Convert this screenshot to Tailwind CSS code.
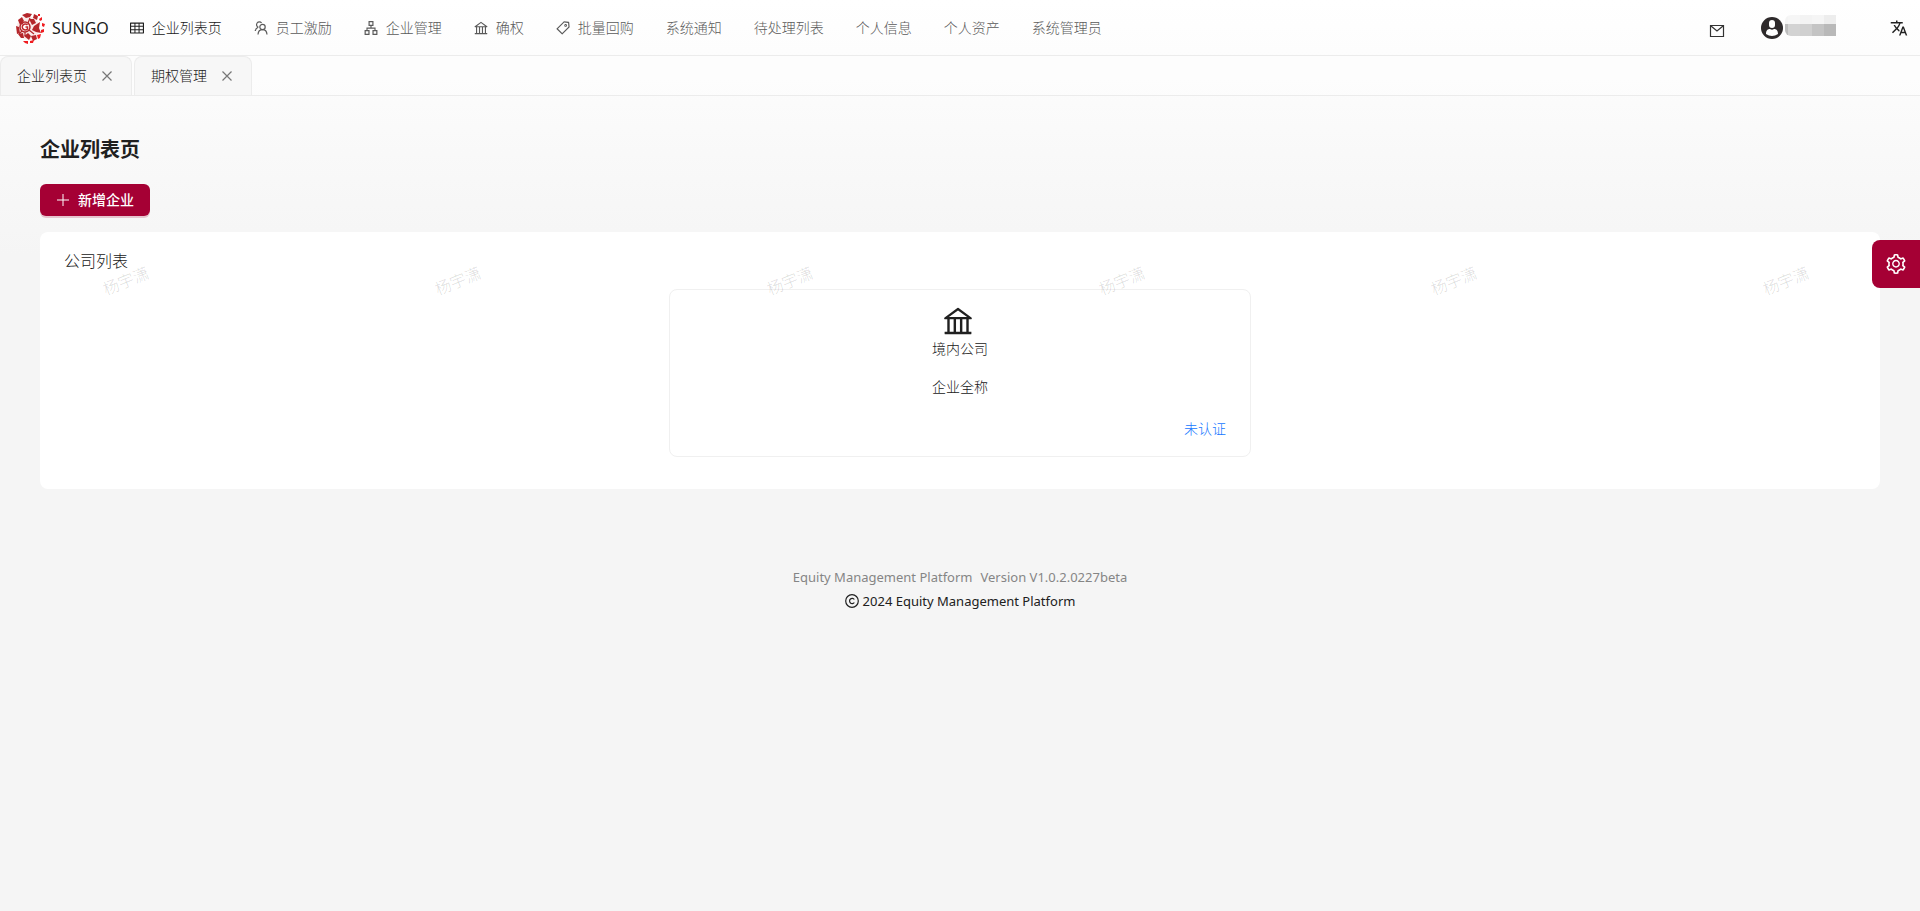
<!DOCTYPE html>
<html lang="zh-CN">
<head>
<meta charset="utf-8">
<title>企业列表页</title>
<script src="https://cdn.jsdelivr.net/npm/@tailwindcss/browser@4"></script>
</head>
<body class="min-h-screen bg-[#f5f5f5] font-['Noto_Sans','Noto_Sans_CJK_SC',sans-serif] text-sm font-light text-[#202020]">
<svg class="hidden" aria-hidden="true">
  <symbol id="bank" viewBox="64 64 896 896"><path d="M894 462c30.9 0 43.8-39.7 18.7-58L530.8 126.2a31.81 31.81 0 00-37.6 0L111.3 404c-25.1 18.2-12.2 58 18.8 58H192v374h-72c-4.4 0-8 3.6-8 8v52c0 4.4 3.6 8 8 8h784c4.4 0 8-3.6 8-8v-52c0-4.4-3.6-8-8-8h-72V462h62zM512 196.7l271.1 197.2H240.9L512 196.7zM264 462h117v374H264V462zm189 0h117v374H453V462zm307 374H642V462h118v374z"/></symbol>
  <symbol id="close" viewBox="0 0 12 12"><path d="M1.5 1.5l9 9M10.5 1.5l-9 9" fill="none" stroke="currentColor" stroke-width="1.2"/></symbol>
</svg>
<div class="relative min-h-screen bg-[linear-gradient(#ffffff,#f5f5f5_28%)]">
  <header class="flex h-14 items-center border-b border-[#ececec] pl-[15px]">
    <a href="#" class="flex items-center gap-[6px] pr-[21px] text-base font-normal">
      <svg class="h-8 w-[31px]" viewBox="0 0 31 32">
        <circle cx="13" cy="16" r="11.5" fill="#fbeaea"/>
        <g fill="#b5262b">
          <path d="M7 3l5-2 5 1-2 3-4 1z"/><path d="M19 2l4 2-1 4-4-2z"/><path d="M3 8l4-3 2 4-4 4z"/><path d="M1 14l3 1 1 6-3 1z"/><path d="M14 7l5 0 2 4-4 2z"/>
          <path d="M3 22l5-1 1 5-3 0z"/><path d="M9 24l4-3 3 3-2 4z"/><path d="M19 14l6-4-1 6 2 5-5-1-4-2z"/><path d="M16 24l5-1 1 4-4 2z"/>
        </g>
        <g fill="#f01c20">
          <path d="M24 7l3-2 0 3-2 1z"/><path d="M27 11l3 1-1 3-2-1z"/><path d="M26 18l3-1 0 3-3 1z"/><path d="M22 23l4-1-1 4-2 1z"/><path d="M8 29l5 0 0 3-3-1z"/><path d="M15 29l4-1-1 3-3 0z"/><path d="M23 2l2 0 0 2-2 0z"/>
        </g>
        <circle cx="10" cy="15" r="5" fill="#fff" stroke="#b5262b" stroke-width="1.5"/>
        <path d="M12.5 13a3 3 0 1 0 0 4v-2h-2" fill="none" stroke="#c0272d" stroke-width="1.5"/>
        <path d="M5 10l3 2M14 18l5 4M7 19l-3 3M13 11l2-5M10 20v4" stroke="#b5262b" stroke-width="1.2"/>
      </svg>
      SUNGO
    </a>
    <nav class="flex items-center gap-8 whitespace-nowrap text-[#5a5a5a]">
      <a href="#" class="flex items-center gap-2 text-[#202020]"><svg class="size-[14px]" viewBox="64 64 896 896" fill="currentColor"><path d="M928 160H96c-17.7 0-32 14.3-32 32v640c0 17.7 14.3 32 32 32h832c17.7 0 32-14.3 32-32V192c0-17.7-14.3-32-32-32zm-40 208H676V232h212v136zm0 224H676V432h212v160zM412 432h200v160H412V432zm200-64H412V232h200v136zm-476 64h212v160H136V432zm0-200h212v136H136V232zm0 424h212v136H136V656zm276 0h200v136H412V656zm476 136H676V656h212v136z"/></svg>企业列表页</a>
      <a href="#" class="flex items-center gap-2"><svg class="size-[14px]" viewBox="0 0 14 14" fill="none" stroke="currentColor" stroke-width="1.2"><path d="M4.4 6.3A2.8 2.8 0 1 1 7.6 2M4.200 6.300C2.400 7 1.500 8.400 1.200 10"/><circle cx="8.5" cy="6" r="2.700"/><path d="M4 13.500c.2-2.900 1.900-4.800 4.500-4.800s4.300 1.900 4.500 4.800"/></svg>员工激励</a>
      <a href="#" class="flex items-center gap-2"><svg class="size-[14px]" viewBox="64 64 896 896" fill="currentColor"><path d="M908 640H804V488c0-4.400-3.600-8-8-8H548v-96h108c8.800 0 16-7.200 16-16V80c0-8.800-7.200-16-16-16H368c-8.800 0-16 7.200-16 16v288c0 8.800 7.200 16 16 16h108v96H228c-4.400 0-8 3.600-8 8v152H116c-8.800 0-16 7.200-16 16v288c0 8.800 7.200 16 16 16h288c8.800 0 16-7.200 16-16V656c0-8.800-7.200-16-16-16H292v-88h440v88H620c-8.800 0-16 7.200-16 16v288c0 8.800 7.200 16 16 16h288c8.800 0 16-7.200 16-16V656c0-8.800-7.200-16-16-16zm-564 76v168H176V716h168zm84-408V140h168v168H428zm420 576H680V716h168v168z"/></svg>企业管理</a>
      <a href="#" class="flex items-center gap-2"><svg class="size-[14px]" fill="currentColor"><use href="#bank"/></svg>确权</a>
      <a href="#" class="flex items-center gap-2"><svg class="size-[14px]" viewBox="64 64 896 896" fill="currentColor"><path d="M938 458.8l-29.6-312.6c-1.5-16.2-14.4-29-30.6-30.6L565.2 86h-.4c-3.2 0-5.7 1-7.6 2.900L88.900 557.200a9.960 9.960 0 000 14.100l363.800 363.800c1.900 1.900 4.400 2.900 7.100 2.900s5.200-1 7.100-2.900l468.300-468.300c2-2.100 3-5 2.800-8zM459.700 834.700L189.300 564.300 589 164.600 836 188l23.400 247-399.700 399.700zM680 256c-48.500 0-88 39.500-88 88s39.500 88 88 88 88-39.500 88-88-39.500-88-88-88zm0 120c-17.700 0-32-14.300-32-32s14.300-32 32-32 32 14.300 32 32-14.300 32-32 32z"/></svg>批量回购</a>
      <a href="#">系统通知</a>
      <a href="#">待处理列表</a>
      <a href="#">个人信息</a>
      <a href="#">个人资产</a>
      <a href="#">系统管理员</a>
    </nav>
    <div class="ml-auto flex items-center pr-3">
      <button aria-label="消息" class="mr-[36px] pt-[6px]"><svg class="block h-[14px] w-4" viewBox="0 0 16 14" fill="none" stroke="#333" stroke-width="1.2"><path d="M1.5 1.5h13v11h-13zM2 2l6 5L14 2"/></svg></button>
      <button aria-label="用户" class="mr-[54px] flex items-center gap-0.5">
        <svg class="size-[22px]" viewBox="0 0 22 22"><circle cx="11" cy="11" r="11" fill="#2e2a2b"/><rect x="8" y="3" width="6" height="8" rx="3" fill="#fff"/><path d="M5 17c0-4 2-5 4-5 1.5 1 2.500 1 4 0 2 0 4 1 4 5q-6 4-12 0z" fill="#fff"/></svg>
        <span class="mb-1 grid h-[21px] w-[51px] grid-cols-[3px_12px_12px_12px_12px] grid-rows-[9px_12px] overflow-hidden rounded-l-md">
          <i class="bg-[#f4f4f4]"></i><i class="bg-[#f6f6f6]"></i><i class="bg-[#f3f3f3]"></i><i class="bg-[#f5f5f5]"></i><i class="bg-[#ededed]"></i>
          <i class="bg-[#bdbdbd]"></i><i class="bg-[#d3d3d3]"></i><i class="bg-[#d0d0d0]"></i><i class="bg-[#c4c4c4]"></i><i class="bg-[#b9b9b9]"></i>
        </span>
      </button>
      <button aria-label="语言"><svg class="block size-[18px]" viewBox="0 0 24 24" fill="#222"><path d="M12.870 15.070l-2.540-2.510.03-.03c1.740-1.940 2.980-4.170 3.710-6.530H17V4h-7V2H8v2H1v1.990h11.170C11.500 7.920 10.440 9.750 9 11.350 8.070 10.320 7.300 9.190 6.690 8h-2c.73 1.630 1.730 3.170 2.980 4.560l-5.090 5.020L4 19l5-5 3.110 3.110.76-2.040zM18.500 10h-2L12 22h2l1.120-3h4.750L21 22h2l-4.500-12zm-2.620 7l1.620-4.330L19.120 17h-3.240z"/></svg></button>
    </div>
  </header>

  <div class="flex h-10 gap-0.5 border-b border-[#ececec] bg-white/30">
    <div class="flex items-center gap-[14px] rounded-t-lg border border-b-0 border-[#ececec] bg-[#f7f7f7] pr-[18px] pl-4">
      <a href="#">企业列表页</a><button aria-label="关闭 企业列表页" class="text-[#777]"><svg class="block size-3"><use href="#close"/></svg></button>
    </div>
    <div class="flex items-center gap-[14px] rounded-t-lg border border-b-0 border-[#ececec] bg-[#f7f7f7] pr-[18px] pl-4">
      <a href="#">期权管理</a><button aria-label="关闭 期权管理" class="text-[#777]"><svg class="block size-3"><use href="#close"/></svg></button>
    </div>
  </div>

  <main class="px-10 pt-[38px]">
    <h1 class="text-xl leading-8 font-bold">企业列表页</h1>
    <button class="mt-[18px] flex h-8 items-center gap-2 rounded-md bg-[#a50034] px-4 font-medium text-white shadow-[0_2px_0_rgba(165,0,52,0.2)]">
      <svg class="size-[14px]" viewBox="0 0 14 14" stroke="currentColor"><path d="M7 1v12M1 7h12"/></svg>新增企业
    </button>
    <section class="relative mt-4 rounded-lg bg-white px-6 pt-[17px] pb-8">
      <h2 class="text-base leading-6">公司列表</h2>
      <article class="mx-auto mt-4 flex h-[168px] w-[582px] flex-col items-center rounded-lg border border-[#f0f0f0] px-6 pt-4 leading-[22px]">
        <svg class="mr-1 size-[30px]" fill="#202020"><use href="#bank"/></svg>
        <p class="mt-0.5">境内公司</p>
        <p class="mt-4">企业全称</p>
        <a href="#" class="mt-5 self-end text-[#1677ff]">未认证</a>
      </article>
      <div aria-hidden="true" class="pointer-events-none absolute top-[37px] left-[56px] flex gap-[272px] text-base leading-6 whitespace-nowrap text-black/15">
        <span class="w-[60px] -rotate-22 text-center">杨宇潇</span><span class="w-[60px] -rotate-22 text-center">杨宇潇</span><span class="w-[60px] -rotate-22 text-center">杨宇潇</span><span class="w-[60px] -rotate-22 text-center">杨宇潇</span><span class="w-[60px] -rotate-22 text-center">杨宇潇</span><span class="w-[60px] -rotate-22 text-center">杨宇潇</span>
      </div>
    </section>
  </main>

  <footer class="mt-[76px] text-center text-[13px] leading-6 font-normal">
    <p class="flex justify-center gap-2 text-[#858585]"><span>Equity Management Platform</span><span>Version V1.0.2.0227beta</span></p>
    <p class="flex items-center justify-center gap-1"><svg class="size-[14px]" viewBox="0 0 14 14" fill="none" stroke="currentColor" stroke-width="1.2"><circle cx="7" cy="7" r="6.3"/><path d="M9.3 5.500a2.600 2.600 0 1 0 0 3"/></svg>2024 Equity Management Platform</p>
  </footer>

  <button aria-label="设置" class="fixed top-60 right-0 flex size-12 items-center justify-center rounded-l-lg bg-[#a50034] text-white">
    <svg class="size-5" viewBox="64 64 896 896" fill="currentColor"><path d="M924.800 625.700l-65.500-56c3.100-19 4.700-38.400 4.700-57.800s-1.600-38.800-4.700-57.800l65.500-56a32.030 32.030 0 009.300-35.200l-.9-2.600a443.740 443.740 0 00-79.700-137.900l-1.800-2.100a32.120 32.120 0 00-35.100-9.500l-81.300 28.900c-30-24.600-63.500-44-99.700-57.600l-15.700-85a32.050 32.050 0 00-25.800-25.700l-2.700-.5c-52.100-9.400-106.900-9.400-159 0l-2.700.5a32.050 32.050 0 00-25.800 25.700l-15.800 85.400a351.860 351.860 0 00-99 57.400l-81.900-29.100a32 32 0 00-35.100 9.500l-1.800 2.100a446.020 446.020 0 00-79.700 137.900l-.9 2.600c-4.500 12.500-.8 26.500 9.300 35.200l66.300 56.600c-3.100 18.800-4.600 38-4.600 57.100 0 19.200 1.500 38.400 4.600 57.100L99 625.500a32.030 32.030 0 00-9.300 35.200l.9 2.600c18.100 50.400 44.900 96.900 79.700 137.900l1.800 2.100a32.120 32.120 0 0035.100 9.500l81.900-29.100c29.800 24.500 63.100 43.900 99 57.400l15.800 85.400a32.050 32.050 0 0025.800 25.700l2.700.5a449.400 449.400 0 00159 0l2.700-.5a32.050 32.050 0 0025.800-25.700l15.700-85a350 350 0 0099.700-57.600l81.300 28.900a32 32 0 0035.100-9.500l1.800-2.100c34.800-41.100 61.600-87.500 79.700-137.900l.9-2.600c4.500-12.300.8-26.300-9.300-35zM788.300 465.900c2.500 15.100 3.800 30.600 3.800 46.100s-1.300 31-3.800 46.100l-6.600 40.100 74.700 63.900a370.030 370.030 0 01-42.600 73.600L721 702.800l-31.400 25.800c-23.900 19.600-50.500 35-79.300 45.800l-38.100 14.300-17.900 97a377.500 377.500 0 01-85 0l-17.900-97.200-37.800-14.500c-28.500-10.800-55-26.200-78.700-45.700l-31.400-25.900-93.400 33.200c-17-22.900-31.200-47.600-42.600-73.600l75.500-64.500-6.500-40c-2.400-14.900-3.700-30.300-3.700-45.500 0-15.300 1.200-30.600 3.700-45.500l6.500-40-75.500-64.500c11.300-26.100 25.600-50.700 42.600-73.600l93.400 33.200 31.400-25.900c23.700-19.500 50.200-34.900 78.700-45.700l37.900-14.300 17.900-97.200c28.100-3.200 56.800-3.200 85 0l17.900 97 38.100 14.300c28.700 10.800 55.400 26.200 79.300 45.800l31.400 25.800 92.800-32.900c17 22.900 31.200 47.600 42.600 73.600L781.800 426l6.500 39.900zM512 326c-97.200 0-176 78.800-176 176s78.800 176 176 176 176-78.800 176-176-78.800-176-176-176zm79.200 255.200A111.600 111.600 0 01512 614c-29.900 0-58-11.700-79.200-32.800A111.600 111.600 0 01400 502c0-29.900 11.700-58 32.800-79.200C454 401.600 482.100 390 512 390c29.900 0 58 11.600 79.200 32.800A111.600 111.600 0 01624 502c0 29.900-11.700 58-32.800 79.200z"/></svg>
  </button>
</div>
</body>
</html>
